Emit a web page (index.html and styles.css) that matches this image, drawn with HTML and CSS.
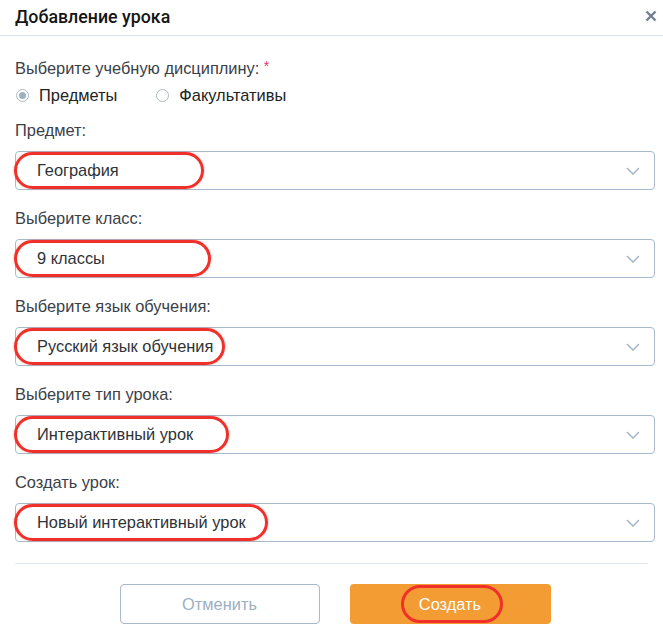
FILE: index.html
```html
<!DOCTYPE html>
<html lang="ru">
<head>
<meta charset="utf-8">
<link rel="stylesheet" href="styles.css">
</head>
<body>
<div class="modal">
  <div class="header">
    <div class="title">Добавление урока</div>
    <svg class="close" width="12" height="12" viewBox="0 0 12 12"><path d="M1.5 1.5L10.5 10.5M10.5 1.5L1.5 10.5" stroke="#6f7f92" stroke-width="2.4" stroke-linecap="butt"/></svg>
  </div>
  <div class="content">
    <div class="label">Выберите учебную дисциплину: <span class="req">*</span></div>
    <div class="radios">
      <label class="radio"><span class="dot checked"></span>Предметы</label>
      <label class="radio"><span class="dot"></span>Факультативы</label>
    </div>

    <div class="field">
      <div class="label">Предмет:</div>
      <div class="select"><span>География</span><svg class="chev" width="14" height="8" viewBox="0 0 14 8"><path d="M1 1L7 7L13 1" fill="none" stroke="#9fb2c5" stroke-width="1.4"/></svg><span class="mark" style="width:190px"></span></div>
    </div>
    <div class="field">
      <div class="label">Выберите класс:</div>
      <div class="select"><span>9 классы</span><svg class="chev" width="14" height="8" viewBox="0 0 14 8"><path d="M1 1L7 7L13 1" fill="none" stroke="#9fb2c5" stroke-width="1.4"/></svg><span class="mark" style="width:197px"></span></div>
    </div>
    <div class="field">
      <div class="label">Выберите язык обучения:</div>
      <div class="select"><span>Русский язык обучения</span><svg class="chev" width="14" height="8" viewBox="0 0 14 8"><path d="M1 1L7 7L13 1" fill="none" stroke="#9fb2c5" stroke-width="1.4"/></svg><span class="mark" style="width:211px"></span></div>
    </div>
    <div class="field">
      <div class="label">Выберите тип урока:</div>
      <div class="select"><span>Интерактивный урок</span><svg class="chev" width="14" height="8" viewBox="0 0 14 8"><path d="M1 1L7 7L13 1" fill="none" stroke="#9fb2c5" stroke-width="1.4"/></svg><span class="mark" style="width:215px"></span></div>
    </div>
    <div class="field">
      <div class="label">Создать урок:</div>
      <div class="select"><span>Новый интерактивный урок</span><svg class="chev" width="14" height="8" viewBox="0 0 14 8"><path d="M1 1L7 7L13 1" fill="none" stroke="#9fb2c5" stroke-width="1.4"/></svg><span class="mark" style="width:254px"></span></div>
    </div>
  </div>
  <div class="footer">
    <button class="btn cancel">Отменить</button>
    <button class="btn create">Создать<span class="mark-btn"></span></button>
  </div>
</div>
</body>
</html>
```

FILE: styles.css
```css
* { box-sizing: border-box; }
html, body { margin: 0; padding: 0; background: #fff; }
body {
  font-family: "Liberation Sans", Arial, sans-serif;
  font-size: 16.4px;
  color: #333a42;
  width: 663px;
  height: 632px;
  overflow: hidden;
}
.modal { width: 663px; }
.header {
  height: 36px;
  padding: 0 4px 0 15px;
  display: flex;
  align-items: center;
  justify-content: space-between;
  border-bottom: 1px solid #dde3ea;
}
.title {
  font-family: Roboto, "Liberation Sans", sans-serif;
  font-size: 17.8px;
  font-weight: 500;
  color: #151515;
  margin-top: -2px;
}
.close { margin-top: -3px; margin-right: 2px; }
.content { padding: 20px 8px 0 15px; }
.label { line-height: 20px; color: #3a4047; }
.req { color: #e8336e; font-size: 14px; vertical-align: 3px; }
.radios { display: flex; gap: 38px; margin-top: 7px; height: 20px; align-items: center; }
.radio { display: flex; align-items: center; gap: 10px; color: #222; }
.dot {
  width: 13px; height: 13px; border-radius: 50%;
  border: 1px solid #a9b9c9; background: #fff;
  display: inline-flex; align-items: center; justify-content: center;
  margin-left: 1px;
}
.dot.checked::after {
  content: ""; width: 7px; height: 7px; border-radius: 50%; background: #9fb0c2;
}
.field { margin-top: 15px; }
.select {
  position: relative;
  margin-top: 11px;
  height: 39px;
  border: 1px solid #a7bacc;
  border-radius: 4px;
  display: flex;
  align-items: center;
  justify-content: space-between;
  padding: 0 14px 0 21px;
  color: #2d3338;
}
.field + .field { margin-top: 18px; }
.mark {
  position: absolute;
  left: -2px; top: 0; height: 37px;
  border: 3px solid #f0302a;
  border-radius: 19px;
  box-shadow: 0 0 2px rgba(240,48,42,0.5);
}
.footer {
  margin: 21px 15px 0 15px;
  border-top: 1px solid #e2e8ef;
  padding: 20px 0 0 7px;
  display: flex;
  justify-content: center;
  gap: 30px;
}
.btn {
  position: relative;
  width: 200px; height: 40px;
  font-family: "Liberation Sans", Arial, sans-serif;
  font-size: 16.4px;
  border-radius: 4px;
  cursor: pointer;
}
.cancel { background: #fff; border: 1px solid #a7bacc; color: #9cb0c4; }
.create { background: #f39c33; border: none; color: #fff; width: 201px; }
.mark-btn {
  position: absolute;
  left: 51px; top: 1px; width: 102px; height: 38px;
  border: 3px solid #f0302a; border-radius: 19px;
}
```
